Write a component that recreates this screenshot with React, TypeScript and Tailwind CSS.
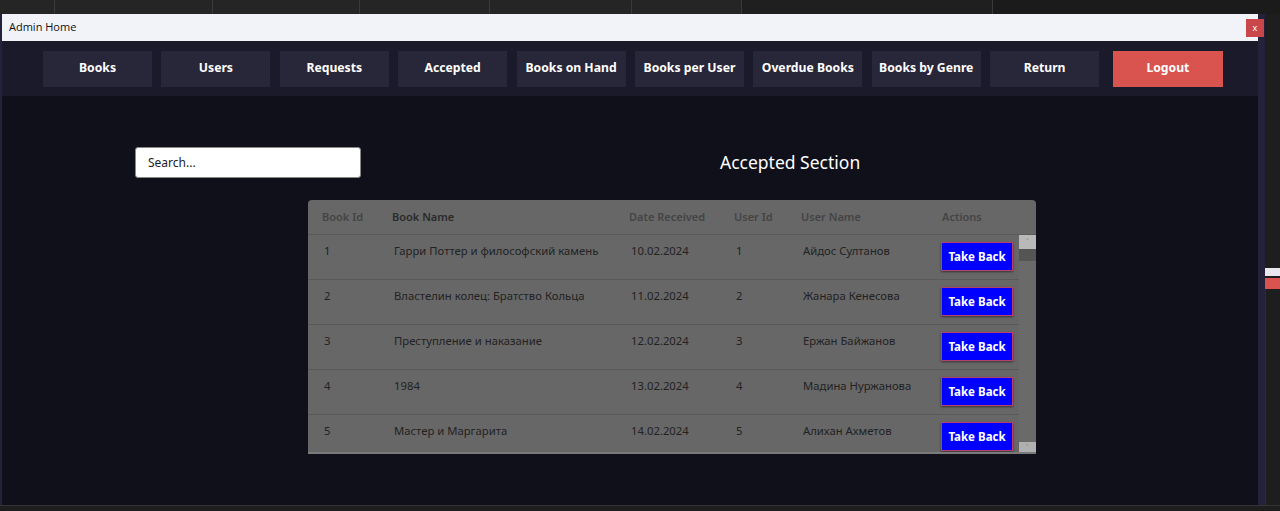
import React from 'react';

const navItems = [
  'Books',
  'Users',
  'Requests',
  'Accepted',
  'Books on Hand',
  'Books per User',
  'Overdue Books',
  'Books by Genre',
  'Return',
];

const rows = [
  { id: 1, name: 'Гарри Поттер и философский камень', date: '10.02.2024', userId: 1, user: 'Айдос Султанов' },
  { id: 2, name: 'Властелин колец: Братство Кольца', date: '11.02.2024', userId: 2, user: 'Жанара Кенесова' },
  { id: 3, name: 'Преступление и наказание', date: '12.02.2024', userId: 3, user: 'Ержан Байжанов' },
  { id: 4, name: '1984', date: '13.02.2024', userId: 4, user: 'Мадина Нуржанова' },
  { id: 5, name: 'Мастер и Маргарита', date: '14.02.2024', userId: 5, user: 'Алихан Ахметов' },
];

const font = { fontFamily: '"Noto Sans", "Open Sans", sans-serif' };

function IdeTabs() {
  const tabs = [55, 158, 147, 130, 142, 110];
  return (
    <div className="flex h-[14px] bg-[#1f1f1f]">
      {tabs.map((w, i) => (
        <div key={i} className="h-full border-r border-[#3a3a3a] bg-[#252526]" style={{ width: w }} />
      ))}
      <div className="w-[250px] h-full" />
      <div className="flex-1 h-full bg-[#1b1b1b] border-l border-[#3a3a3a]" />
    </div>
  );
}

export default function App() {
  return (
    <div className="w-[1280px] h-[511px] overflow-hidden bg-[#1e1e1e] flex flex-col" style={font}>
      <IdeTabs />
      <div className="flex h-[491px]">
        {/* window */}
        <div className="w-[1265px] h-full flex flex-col border-l-2 border-r-[7px] border-[#24223a] bg-[#0f1019]">
          {/* title bar */}
          <div className="h-[27px] bg-[#f2f3f9] flex items-center justify-between pl-[7px] pr-0">
            <span className="text-[11px] text-[#111]" style={{ fontFamily: '"Open Sans", sans-serif' }}>Admin Home</span>
            <div className="w-[18px] h-[18px] bg-[#c9464b] flex items-center justify-center text-[9px] text-white leading-none mr-[-6px]">
              x
            </div>
          </div>
          {/* nav */}
          <div className="h-[55px] bg-[#1b1a2b] flex items-center pl-[41px]">
            <div className="flex gap-[9.4px]">
              {navItems.map((n) => (
                <div
                  key={n}
                  className="w-[109px] h-[36px] bg-[#282739] flex items-center justify-center text-[12.2px] font-bold text-white"
                >
                  {n}
                </div>
              ))}
            </div>
            <div className="ml-[13.8px] w-[110px] h-[36px] bg-[#d9534f] flex items-center justify-center text-[12.2px] font-bold text-white">
              Logout
            </div>
          </div>
          {/* main */}
          <div className="flex-1 flex flex-col">
            <div className="flex items-center mt-[51px] pl-[133px]">
              <div className="w-[226px] h-[31px] bg-white rounded-[3px] border border-[#888] flex items-center pl-[12px] text-[12px] text-[#222]">
                Search...
              </div>
              <div className="ml-[359px] text-[17.5px] text-white">Accepted Section</div>
            </div>
            <div className="ml-[306px] mt-[22px] w-[728px] h-[254px] bg-[#676767] rounded-t-[4px] overflow-hidden relative border-b-2 border-[#7a7a7a]">
              {/* header */}
              <div className="flex h-[35px] items-center text-[11px] font-semibold border-b border-[#5a5a5a]">
                <div className="w-[70px] pl-[14px] text-[#444]">Book Id</div>
                <div className="w-[237px] pl-[14px] text-[#2a2a2a]">Book Name</div>
                <div className="w-[105px] pl-[14px] text-[#444]">Date Received</div>
                <div className="w-[67px] pl-[14px] text-[#444]">User Id</div>
                <div className="w-[141px] pl-[14px] text-[#444]">User Name</div>
                <div className="w-[91px] pl-[14px] text-[#444]">Actions</div>
              </div>
              <div className="flex">
                <div className="w-[711px]">
                  {rows.map((r) => (
                    <div key={r.id} className="flex h-[45px] border-b border-[#5a5a5a] text-[11.3px] text-[#222]">
                      <div className="w-[70px] pl-[16px] pt-[8px]">{r.id}</div>
                      <div className="w-[237px] pl-[16px] pt-[8px]">{r.name}</div>
                      <div className="w-[105px] pl-[16px] pt-[8px]">{r.date}</div>
                      <div className="w-[67px] pl-[16px] pt-[8px]">{r.userId}</div>
                      <div className="w-[141px] pl-[16px] pt-[8px]">{r.user}</div>
                      <div className="w-[91px] pl-[13px] pt-[7px]">
                        <div className="w-[72px] h-[29px] bg-[#0000ff] border border-[#b8406e] shadow-[0_1px_2px_rgba(0,0,0,0.5)] flex items-center justify-center text-[11.5px] font-bold text-white">
                          Take Back
                        </div>
                      </div>
                    </div>
                  ))}
                </div>
                {/* scrollbar */}
                <div className="w-[17px] h-[219px] flex flex-col bg-[#6a6a6a]">
                  <div className="h-[14px] bg-[#b9b9b9] flex items-center justify-center text-[8px] text-[#777] leading-none">˄</div>
                  <div className="h-[12px] bg-[#555]" />
                  <div className="flex-1" />
                  <div className="h-[12px] bg-[#b0b0b0] flex items-center justify-center text-[8px] text-[#777] leading-none">˅</div>
                </div>
              </div>
            </div>
          </div>
        </div>
        {/* right sliver */}
        <div className="flex-1 flex flex-col bg-[#1e1e1e]">
          <div className="h-[254px]" />
          <div className="h-[8px] bg-[#e8e8ee]" />
          <div className="h-[2px]" />
          <div className="h-[11px] bg-[#d9534f]" />
          <div className="flex-1 border-l border-[#2c2c2c]" />
        </div>
      </div>
      <div className="flex-1 bg-[#1e1e1e] border-t border-[#333]" />
    </div>
  );
}
